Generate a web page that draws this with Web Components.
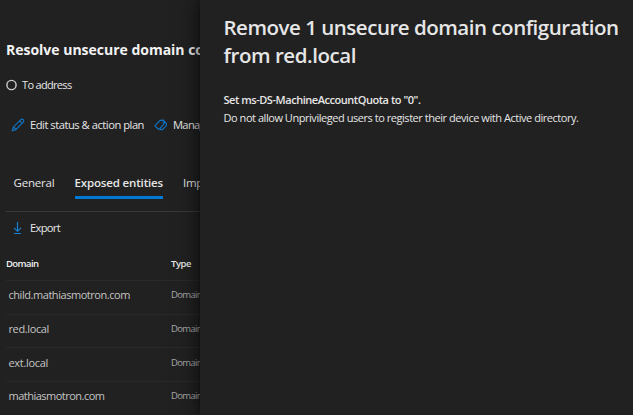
<!DOCTYPE html>
<html lang="en">
<head>
<meta charset="utf-8">
<title>Resolve unsecure domain configurations</title>
<style>
html,body{margin:0;height:100%;background:#212121;overflow:hidden}
body{font-family:"Open Sans","Noto Sans",sans-serif;color:#e6e6e6}
</style>
</head>
<body>
<app-shell></app-shell>
<script>
function define(name, html, setup) {
  const t = document.createElement('template');
  t.innerHTML = html;
  customElements.define(name, class extends HTMLElement {
    constructor() {
      super();
      this.attachShadow({mode: 'open'}).appendChild(t.content.cloneNode(true));
    }
    connectedCallback() { if (setup) setup.call(this, this.shadowRoot); }
  });
}

/* One line of text, tracked so that it fills the given width. */
define('fit-text', `<style>:host{display:block;flex:none;white-space:nowrap}span{display:block;width:max-content}</style><span><slot></slot></span>`, function (root) {
  const span = root.querySelector('span');
  const want = +this.getAttribute('width');
  const n = this.textContent.length;
  span.style.letterSpacing = '0px';
  const have = span.getBoundingClientRect().width;
  span.style.letterSpacing = ((want - have) / n).toFixed(3) + 'px';
});

define('ui-icon', `
<style>:host{display:block;flex:none;width:14px;height:14px}svg{display:none;width:100%;height:100%;overflow:visible;fill:none;stroke:#0f74c4;stroke-width:1.15}
:host([name=edit]) .edit,:host([name=tag]) .tag,:host([name=download]) .download,:host([name=ring]) .ring{display:block}</style>
<svg class="edit" viewBox="0 0 14 14"><path d="M1.3 12.7 2.3 9.2 9.6 1.9Q11.1.6 12.3 1.7 13.4 2.9 12.1 4.4L4.8 11.7ZM8.6 2.9 11.1 5.4M2.3 9.2Q4.3 9.6 4.8 11.7"/></svg>
<svg class="tag" viewBox="0 0 14 14"><path d="M1.2 7.3 6.2 2.4 9.6 2.2 10.1 5.6 5.4 11.1 4.4 11.1 1.2 8.2ZM10.2 3.2 12.4 5.4V7.6L8.3 11.6H6.8L6.1 10.9M7.8 4.4h.6"/></svg>
<svg class="download" viewBox="0 0 14 14"><path d="M6.5 1V10M3 6.8 6.5 10.3 10 6.8M3 12.5H10" stroke="#1684d8"/></svg>
<svg class="ring" viewBox="0 0 14 14"><circle cx="6.5" cy="7" r="4.6" stroke="#d0d0d0" stroke-width="1.4"/></svg>`);

define('action-button', `
<style>:host{display:flex;align-items:center;gap:5px;font-size:11.2px;line-height:14px;font-weight:500;flex:none}</style>
<slot name="icon"></slot><slot></slot>`);

define('tab-item', `
<style>:host{display:block;box-sizing:border-box;height:30px;line-height:27px;font-size:11.5px;font-weight:450;flex:none}
:host([selected]){font-weight:650;border-bottom:3px solid #0078d4}</style><slot></slot>`);

define('table-row', `
<style>:host{display:grid;grid-template-columns:162.5px 1fr;align-items:center;box-sizing:border-box;height:33.67px;padding:0 0 5px 2.5px;border-bottom:1px solid #292929;font-size:11px;font-weight:450;color:#c4c4c4}
:host([head]){height:33px;padding:0 0 2px;grid-template-columns:165px 1fr;font-size:9.5px;font-weight:650;color:#eee}
::slotted([slot=type]){font-size:9.5px;color:#aaa}:host([head]) ::slotted([slot=type]){color:#e8e8e8}</style>
<slot></slot><slot name="type"></slot>`);

define('entity-page', `
<style>
:host{display:block;box-sizing:border-box;width:200px;height:415px;padding:39px 0 0 6px;overflow:hidden}
.title{height:21px;line-height:21px;font-size:14px;font-weight:700;color:#f3f3f3}
.status,.bar,.tabs,.export{display:flex;align-items:center}
.status{height:19px;margin-top:15px;gap:3px;margin-left:-1px;font-size:11px;font-weight:500}
.bar{height:30px;margin-top:16px;padding-left:5px;gap:11px}
.tabs{margin-top:29px;padding-left:7.5px;gap:20px;align-items:flex-start}
hr{border:0;height:1px;background:#393939;margin:12px 0 0}
.export{height:32px;padding-left:5px}
table-row[head]{margin-top:4px}
</style>
<div class="title"><fit-text width="198">Resolve unsecure domain co</fit-text></div>
<div class="status"><ui-icon name="ring"></ui-icon><fit-text width="49.5">To address</fit-text></div>
<div class="bar">
<action-button><ui-icon slot="icon" name="edit"></ui-icon><fit-text width="114">Edit status &amp; action plan</fit-text></action-button>
<action-button style="margin-left:-1px"><ui-icon slot="icon" name="tag"></ui-icon><fit-text width="32">Manag</fit-text></action-button>
</div>
<div class="tabs">
<tab-item><fit-text width="41">General</fit-text></tab-item>
<tab-item selected><fit-text width="88.5">Exposed entities</fit-text></tab-item>
<tab-item><fit-text width="20">Imp</fit-text></tab-item>
</div>
<hr>
<div class="export"><action-button><ui-icon slot="icon" name="download"></ui-icon><fit-text width="30">Export</fit-text></action-button></div>
<table-row head><fit-text width="32.5">Domain</fit-text><fit-text slot="type" width="20">Type</fit-text></table-row>
<table-row><fit-text width="121.5">child.mathiasmotron.com</fit-text><fit-text slot="type" width="31">Domain</fit-text></table-row>
<table-row><fit-text width="40.5">red.local</fit-text><fit-text slot="type" width="31">Domain</fit-text></table-row>
<table-row><fit-text width="39.5">ext.local</fit-text><fit-text slot="type" width="31">Domain</fit-text></table-row>
<table-row><fit-text width="96">mathiasmotron.com</fit-text><fit-text slot="type" width="31">Domain</fit-text></table-row>`);

define('side-panel', `
<style>
:host{display:block;position:relative;box-sizing:border-box;height:415px;padding:13px 0 0 23.5px;background:#212121;box-shadow:0 0 22px rgba(0,0,0,.7),0 0 5px rgba(0,0,0,.3)}
.head{font-size:20.5px;line-height:28px;font-weight:650;color:#e6e6e6}
.body{margin-top:22px;font-size:11px;line-height:18px;font-weight:500}
.strong{font-weight:650}
</style>
<div class="head"><fit-text width="395">Remove 1 unsecure domain configuration</fit-text><fit-text width="132.5">from red.local</fit-text></div>
<div class="body"><fit-text class="strong" width="197">Set ms-DS-MachineAccountQuota to "0".</fit-text><fit-text width="355">Do not allow Unprivileged users to register their device with Active directory.</fit-text></div>`);

define('app-shell', `
<style>:host{display:grid;grid-template-columns:200px 1fr;height:415px;overflow:hidden}</style>
<entity-page></entity-page><side-panel></side-panel>`);
</script>
</body>
</html>
